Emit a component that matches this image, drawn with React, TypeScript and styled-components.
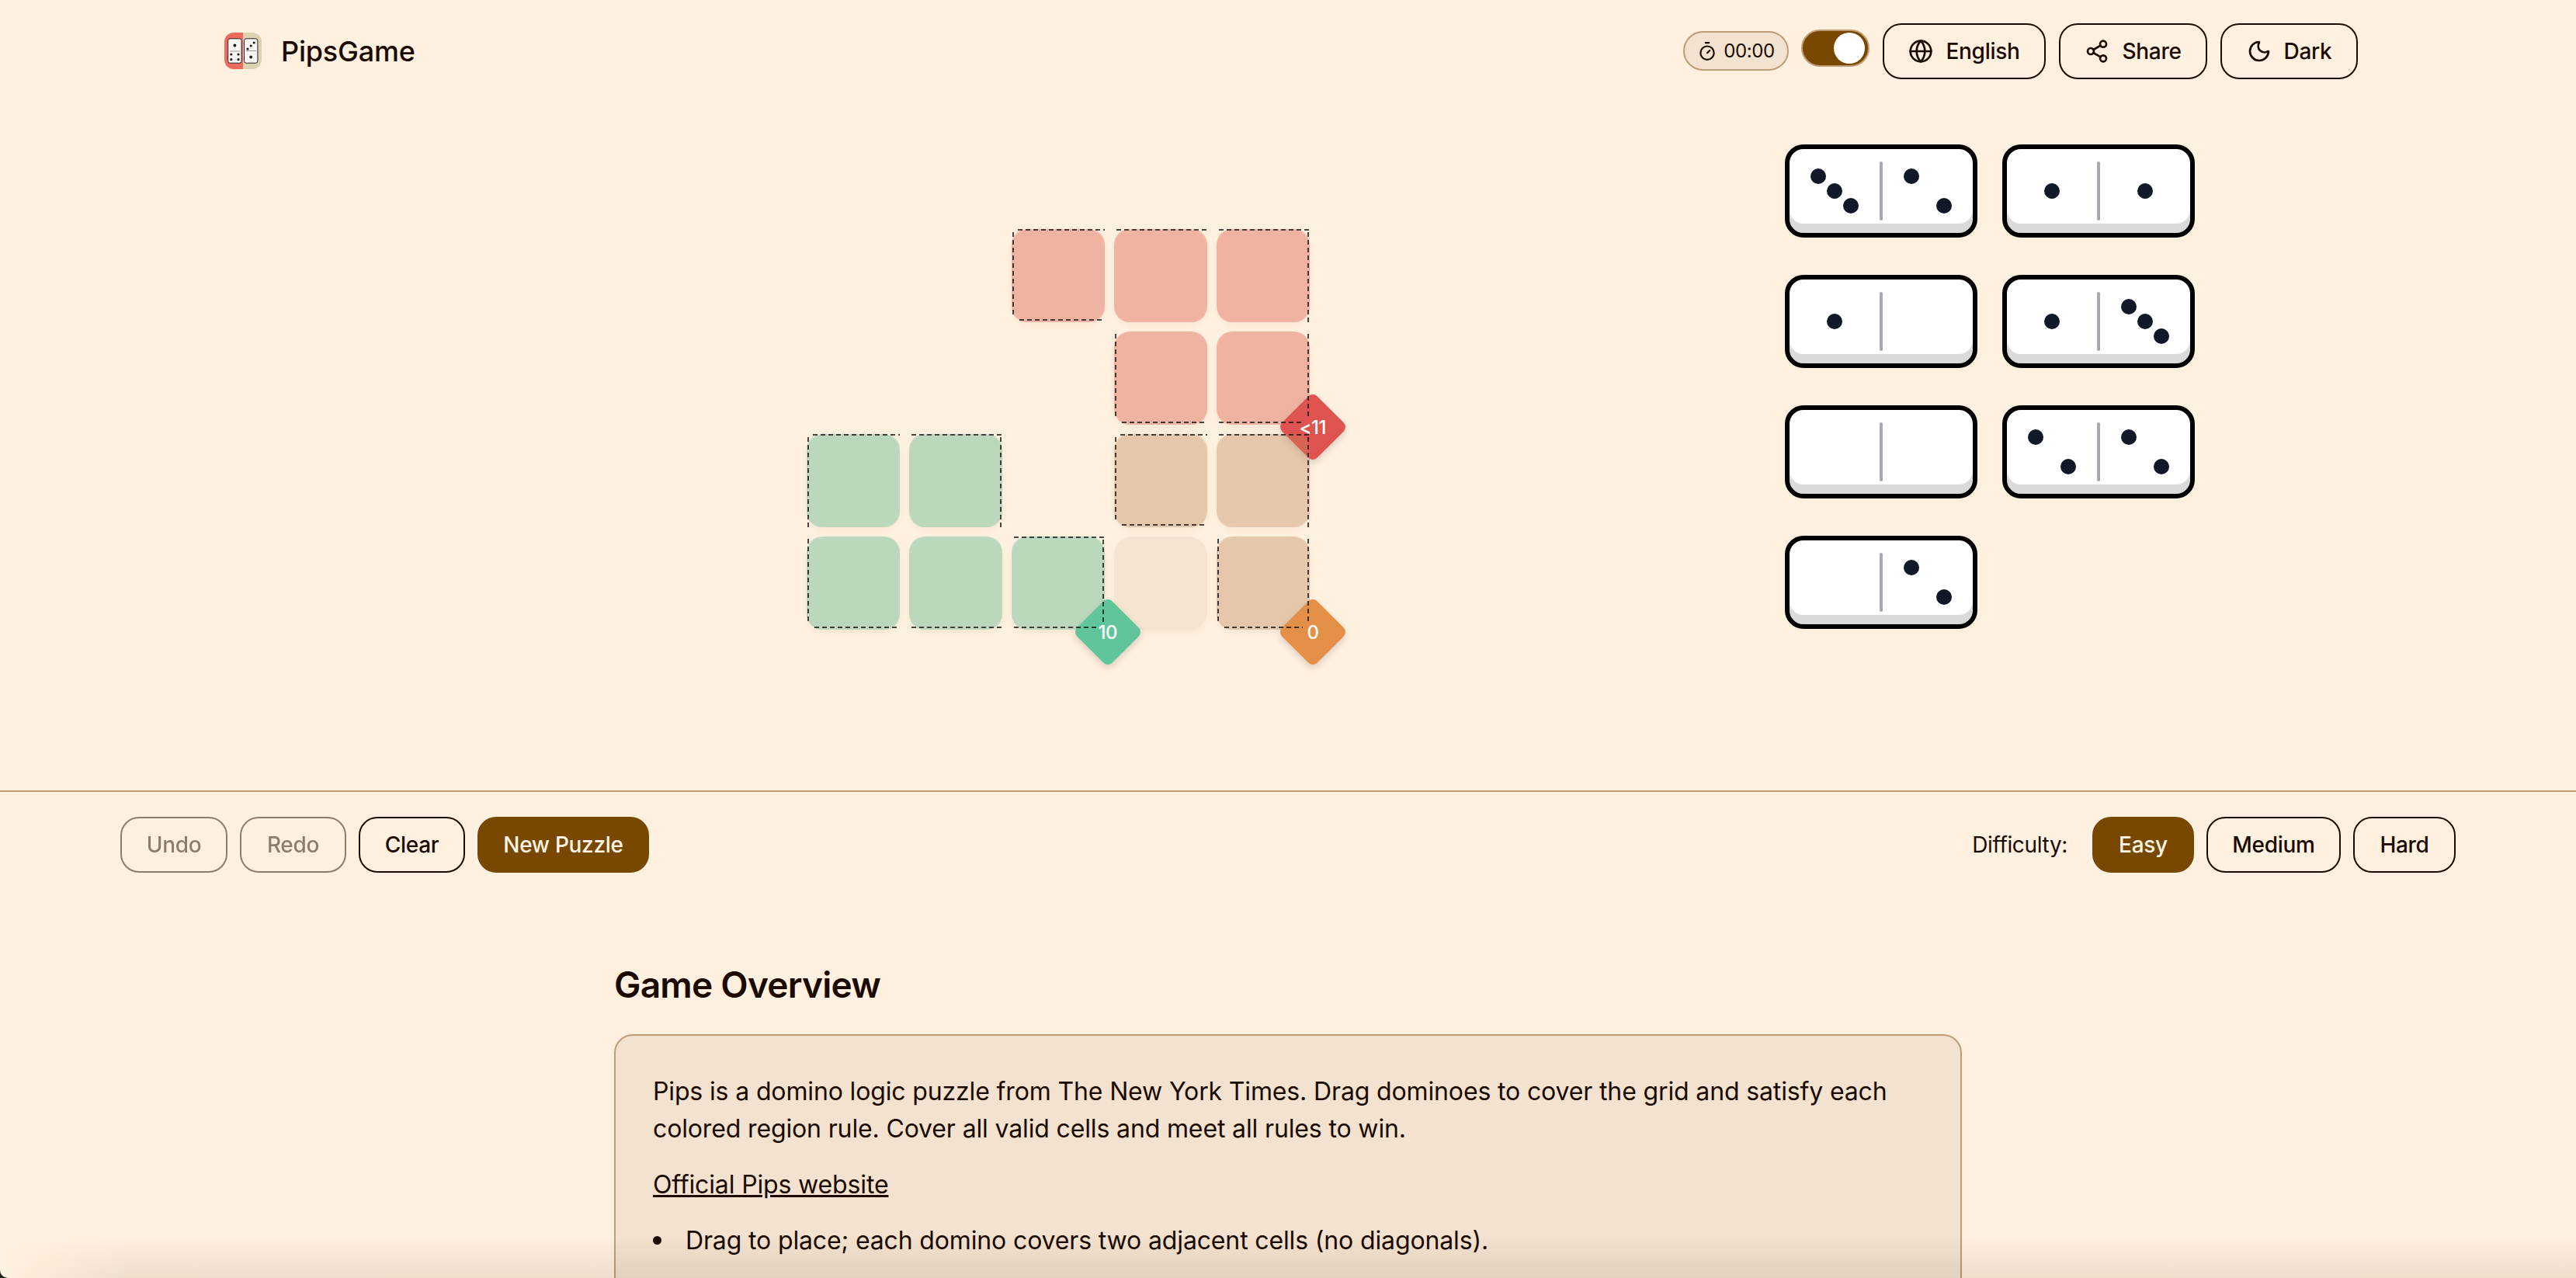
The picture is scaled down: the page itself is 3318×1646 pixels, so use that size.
import React from 'react';
import styled, { createGlobalStyle } from 'styled-components';
import { Globe, Share2, Moon, Timer } from 'lucide-react';

const GlobalStyle = createGlobalStyle`
  html, body { margin: 0; padding: 0; background: #16220F; }
  body { font-family: Inter, "Noto Sans", sans-serif; color: #1A0A00; overflow: hidden; }
  * { box-sizing: border-box; }
`;

const Page = styled.div`
  position: relative;
  height: 1646px;
  overflow: hidden;
  background: #FFF0DF;
  border-bottom-left-radius: 10px;
`;

const Header = styled.header`
  height: 131px;
  padding: 0 281px 0 289px;
  display: flex;
  align-items: center;
  justify-content: space-between;
`;

const Brand = styled.div`
  display: flex;
  align-items: center;
  gap: 25px;
  font-size: 36px;
  font-weight: 500;
  letter-spacing: -0.2px;
`;

const HeaderActions = styled.div`
  display: flex;
  align-items: center;
  gap: 17px;
`;

const TimerPill = styled.div`
  width: 136px;
  height: 51px;
  margin-right: -1px;
  border: 2px solid #BF9B76;
  border-radius: 26px;
  background: #F3E2CF;
  display: flex;
  align-items: center;
  justify-content: center;
  gap: 8px;
  font-size: 24px;
  letter-spacing: -0.4px;
`;

const Toggle = styled.div`
  width: 88px;
  height: 48px;
  border: 2px solid #BF9B76;
  border-radius: 24px;
  background: #784800;
  display: flex;
  align-items: center;
  justify-content: flex-end;
  padding-right: 4px;
  margin-bottom: 7px;
`;

const Knob = styled.span`
  width: 40px;
  height: 40px;
  border-radius: 50%;
  background: #fff;
`;

const Button = styled.button<{ $variant?: 'solid' | 'outline' | 'muted'; $w: number }>`
  width: ${p => p.$w}px;
  height: 72px;
  border-radius: 24px;
  border: 2px solid ${p => (p.$variant === 'solid' ? '#784800' : '#1A0A00')};
  background: ${p => (p.$variant === 'solid' ? '#784800' : 'transparent')};
  color: ${p => (p.$variant === 'solid' ? '#FFF5E8' : '#1A0A00')};
  opacity: ${p => (p.$variant === 'muted' ? 0.5 : 1)};
  font-family: inherit;
  font-size: 28px;
  font-weight: 450;
  letter-spacing: -0.3px;
  display: inline-flex;
  align-items: center;
  justify-content: center;
  gap: 16px;
  padding: 0;
`;

const GameArea = styled.section`
  height: 887px;
  padding-left: 1039px;
  display: flex;
  gap: 612px;
  align-items: flex-start;
`;

const Board = styled.div`
  position: relative;
  margin-top: 164px;
  width: 648px;
  height: 516px;
`;

const BaseGrid = styled.div`
  display: grid;
  grid-template-columns: repeat(5, 120px);
  grid-template-rows: repeat(4, 120px);
  gap: 12px;
`;

const RegionGrid = styled(BaseGrid)`
  position: absolute;
  inset: 0;
`;

const Cell = styled.div<{ $r: number; $c: number }>`
  grid-row: ${p => p.$r + 1};
  grid-column: ${p => p.$c + 1};
  background: #F3E3D0;
  border-radius: 24px;
  box-shadow: 0 4px 8px rgba(120, 72, 0, 0.06);
`;

const regionColor = {
  red: 'rgba(234, 90, 77, 0.35)',
  green: 'rgba(96, 197, 154, 0.38)',
  orange: 'rgba(199, 137, 90, 0.3)',
};

const Tint = styled.div<{ $r: number; $c: number; $region: keyof typeof regionColor }>`
  position: relative;
  grid-row: ${p => p.$r + 1};
  grid-column: ${p => p.$c + 1};
  background: ${p => regionColor[p.$region]};
  border-radius: 20px;
`;

const DASH = 'rgba(25, 22, 20, 0.78)';

const HEdge = styled.span<{ $side: 'top' | 'bottom'; $from: number; $to: number }>`
  position: absolute;
  ${p => (p.$side === 'top' ? 'top: 0;' : 'bottom: 2px;')}
  left: ${p => p.$from}px;
  right: ${p => p.$to}px;
  height: 2px;
  background: repeating-linear-gradient(to right, ${DASH} 0 6px, transparent 6px 10px);
`;

const VEdge = styled.span<{ $side: 'left' | 'right'; $from: number; $to: number }>`
  position: absolute;
  ${p => (p.$side === 'left' ? 'left: 1px;' : 'right: 1px;')}
  top: ${p => p.$from}px;
  bottom: ${p => p.$to}px;
  width: 2px;
  background: repeating-linear-gradient(to bottom, ${DASH} 0 6px, transparent 6px 10px);
`;

const diamondColor = { red: '#DF5450', green: '#60C59A', orange: '#E48F47' };

const Diamond = styled.div<{ $region: keyof typeof diamondColor }>`
  position: absolute;
  right: -36px;
  bottom: -35px;
  width: 64px;
  height: 64px;
  border-radius: 8px;
  background: ${p => diamondColor[p.$region]};
  box-shadow: 3px 3px 10px rgba(0, 0, 0, 0.14);
  transform: rotate(45deg);
  display: flex;
  align-items: center;
  justify-content: center;
`;

const DiamondLabel = styled.span`
  transform: rotate(-45deg);
  color: #fff;
  font-size: 24px;
  font-weight: 450;
  letter-spacing: -0.6px;
`;

const Tray = styled.div`
  margin-top: 55px;
  display: grid;
  grid-template-columns: repeat(2, 248px);
  gap: 48px 32px;
`;

const Domino = styled.div`
  width: 248px;
  height: 120px;
  border: 6px solid #000;
  border-radius: 24px;
  background: #fff;
  box-shadow: inset 0 -12px 0 #DADADA;
  padding: 16px 0;
  display: flex;
  align-items: center;
`;

const Half = styled.div`
  width: 116px;
  display: grid;
  justify-content: center;
  align-content: center;
  grid-template-columns: repeat(3, 21px);
  grid-template-rows: repeat(3, 19px);
`;

const Divider = styled.div`
  width: 4px;
  height: 76px;
  border-radius: 2px;
  background: #A5A8B0;
`;

const Pip = styled.span<{ $p: number }>`
  grid-row: ${p => Math.floor(p.$p / 3) + 1};
  grid-column: ${p => (p.$p % 3) + 1};
  width: 20px;
  height: 20px;
  border-radius: 50%;
  background: #111827;
  place-self: center;
`;

const Toolbar = styled.div`
  height: 106px;
  border-top: 2px solid #BF9B76;
  padding: 32px 155px 0;
  display: flex;
  align-items: flex-start;
  justify-content: space-between;
`;

const ButtonGroup = styled.div`
  display: flex;
  align-items: center;
  gap: 16px;
`;

const DifficultyLabel = styled.span`
  font-size: 28px;
  letter-spacing: -0.35px;
  margin-right: 16px;
`;

const Content = styled.main`
  width: 1736px;
  margin: 0 0 0 791px;
  padding-top: 116px;
`;

const Title = styled.h2`
  margin: 0 0 36px;
  font-size: 46px;
  line-height: 56px;
  font-weight: 600;
  letter-spacing: -0.75px;
`;

const Card = styled.div`
  border: 2px solid #BF9B76;
  border-radius: 24px;
  background: #F3E2CF;
  padding: 48px;
  font-size: 32px;
  line-height: 48px;
  letter-spacing: -0.14px;
`;

const Para = styled.p`
  margin: 0 0 24px;
`;

const Link = styled.a`
  color: inherit;
  text-decoration: underline;
`;

const List = styled.ul`
  margin: 0;
  padding-left: 42px;
  list-style: none;
`;

const Item = styled.li`
  position: relative;
  &::before {
    content: '';
    position: absolute;
    left: -42px;
    top: 18px;
    width: 11px;
    height: 11px;
    border-radius: 50%;
    background: #1A0A00;
  }
`;

const BottomShade = styled.div`
  position: absolute;
  left: 0;
  right: 0;
  bottom: 0;
  height: 54px;
  background: linear-gradient(to bottom, rgba(60, 40, 20, 0), rgba(60, 40, 20, 0.09));
  mask-image: linear-gradient(to right, transparent 0, #000 170px);
  pointer-events: none;
`;

const Logo = () => (
  <svg width="48" height="47" viewBox="0 0 48 47">
    <path d="M12 0h12v47H12A12 12 0 0 1 0 35V12A12 12 0 0 1 12 0z" fill="#EC6A5E" />
    <path d="M24 0h12a12 12 0 0 1 12 12v23a12 12 0 0 1-12 12H24z" fill="#DDD2B0" />
    <rect x="4.7" y="7.8" width="17.4" height="31.4" rx="2.5" fill="#F7F6F2" stroke="#2A2320" strokeWidth="1" />
    <rect x="25.5" y="7.8" width="17.4" height="31.4" rx="2.5" fill="#F7F6F2" stroke="#2A2320" strokeWidth="1" />
    <path d="M7 24h13M28 23.5h13" stroke="#9A9590" strokeWidth="1" />
    <g fill="#1F1A18">
      <circle cx="13.4" cy="16.5" r="1.9" />
      <circle cx="8.8" cy="28" r="1.6" /><circle cx="18" cy="28" r="1.6" />
      <circle cx="8.8" cy="34.7" r="1.6" /><circle cx="18" cy="34.7" r="1.6" />
      <circle cx="30" cy="21" r="1.6" /><circle cx="34.2" cy="17" r="1.6" /><circle cx="38.2" cy="13" r="1.6" />
      <circle cx="34.2" cy="31.5" r="1.9" />
    </g>
  </svg>
);

const baseCells: [number, number][] = [
  [0, 2], [0, 3], [0, 4], [1, 3], [1, 4],
  [2, 0], [2, 1], [2, 3], [2, 4],
  [3, 0], [3, 1], [3, 2], [3, 3], [3, 4],
];

type Region = keyof typeof regionColor;
const regionCells: { r: number; c: number; region: Region; edges: string; badge?: string }[] = [
  { r: 0, c: 2, region: 'red', edges: 'tlb' },
  { r: 0, c: 3, region: 'red', edges: 't' },
  { r: 0, c: 4, region: 'red', edges: 'tr' },
  { r: 1, c: 3, region: 'red', edges: 'lb' },
  { r: 1, c: 4, region: 'red', edges: 'rb', badge: '<11' },
  { r: 2, c: 0, region: 'green', edges: 'tl' },
  { r: 2, c: 1, region: 'green', edges: 'tr' },
  { r: 2, c: 3, region: 'orange', edges: 'tlb' },
  { r: 2, c: 4, region: 'orange', edges: 'tr' },
  { r: 3, c: 0, region: 'green', edges: 'lb' },
  { r: 3, c: 1, region: 'green', edges: 'b' },
  { r: 3, c: 2, region: 'green', edges: 'trb', badge: '10' },
  { r: 3, c: 4, region: 'orange', edges: 'lrb', badge: '0' },
];

const patterns: Record<number, number[]> = {
  0: [],
  1: [4],
  2: [0, 8],
  3: [0, 4, 8],
};

const dominoes: [number, number][] = [[3, 2], [1, 1], [1, 0], [1, 3], [0, 0], [2, 2], [0, 2]];

const DominoHalf = ({ n }: { n: number }) => (
  <Half>
    {patterns[n].map(p => <Pip key={p} $p={p} />)}
  </Half>
);

const CellEdges = ({ e }: { e: string }) => {
  const has = (k: string) => e.includes(k);
  return (
    <>
      {has('t') && <HEdge $side="top" $from={has('l') ? 8 : 3} $to={0} />}
      {has('b') && <HEdge $side="bottom" $from={has('l') ? 10 : 3} $to={has('r') ? 9 : 0} />}
      {has('l') && <VEdge $side="left" $from={has('t') ? 4 : 3} $to={has('b') ? 9 : 0} />}
      {has('r') && <VEdge $side="right" $from={has('t') ? 4 : 3} $to={has('b') ? 9 : 0} />}
    </>
  );
};

export default function App() {
  return (
    <Page>
      <GlobalStyle />
      <Header>
        <Brand><Logo />PipsGame</Brand>
        <HeaderActions>
          <TimerPill><Timer size={26} strokeWidth={2} />00:00</TimerPill>
          <Toggle><Knob /></Toggle>
          <Button $w={210}><Globe size={32} strokeWidth={2} />English</Button>
          <Button $w={191}><Share2 size={32} strokeWidth={2} />Share</Button>
          <Button $w={177}><Moon size={32} strokeWidth={2} />Dark</Button>
        </HeaderActions>
      </Header>

      <GameArea>
        <Board>
          <BaseGrid>
            {baseCells.map(([r, c]) => <Cell key={`${r}-${c}`} $r={r} $c={c} />)}
          </BaseGrid>
          <RegionGrid>
            {regionCells.map(cell => (
              <Tint key={`${cell.r}-${cell.c}`} $r={cell.r} $c={cell.c} $region={cell.region}>
                {cell.badge && (
                  <Diamond $region={cell.region}><DiamondLabel>{cell.badge}</DiamondLabel></Diamond>
                )}
                <CellEdges e={cell.edges} />
              </Tint>
            ))}
          </RegionGrid>
        </Board>
        <Tray>
          {dominoes.map(([a, b], i) => (
            <Domino key={i}>
              <DominoHalf n={a} />
              <Divider />
              <DominoHalf n={b} />
            </Domino>
          ))}
        </Tray>
      </GameArea>

      <Toolbar>
        <ButtonGroup>
          <Button $w={138} $variant="muted">Undo</Button>
          <Button $w={137} $variant="muted">Redo</Button>
          <Button $w={137}>Clear</Button>
          <Button $w={221} $variant="solid">New Puzzle</Button>
        </ButtonGroup>
        <ButtonGroup>
          <DifficultyLabel>Difficulty:</DifficultyLabel>
          <Button $w={131} $variant="solid">Easy</Button>
          <Button $w={173}>Medium</Button>
          <Button $w={132}>Hard</Button>
        </ButtonGroup>
      </Toolbar>

      <Content>
        <Title>Game Overview</Title>
        <Card>
          <Para>Pips is a domino logic puzzle from The New York Times. Drag dominoes to cover the grid and satisfy each colored region rule. Cover all valid cells and meet all rules to win.</Para>
          <Para><Link href="#">Official Pips website</Link></Para>
          <List>
            <Item>Drag to place; each domino covers two adjacent cells (no diagonals).</Item>
          </List>
        </Card>
      </Content>
      <BottomShade />
    </Page>
  );
}
